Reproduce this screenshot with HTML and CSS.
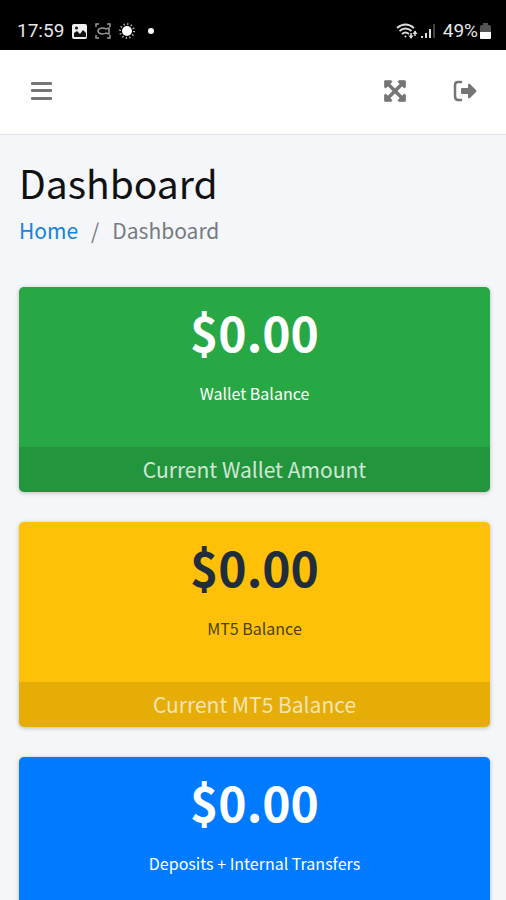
FILE: index.html
```html
<!DOCTYPE html>
<html lang="en">
<head>
<meta charset="utf-8">
<meta name="viewport" content="width=device-width, initial-scale=1">
<title>Dashboard</title>
<link rel="stylesheet" href="styles.css">
</head>
<body>
<div class="status">
  <div class="status-group">
    <span class="clock">17:59</span>
    <svg width="17" height="17" viewBox="0 0 17 17"><rect x="1" y="1" width="15" height="15" rx="2" fill="#eee"/><path d="M3 10l3-2 3 3 3-4 3 3v4H3z" fill="#111"/><circle cx="5.500" cy="5" r="1.500" fill="#111"/></svg>
    <svg width="18" height="18" viewBox="0 0 18 18" fill="none" stroke="#999" stroke-width="1.500"><path d="M2 5V2h3M13 2h3v3M16 13v3h-3M5 16H2v-3"/><path d="M5 7q4-2 7 0l3-1v6l-3-1q-3 2-7 0-2-2 0-4z"/></svg>
    <svg class="sun" width="18" height="18" viewBox="0 0 18 18"><circle cx="9" cy="9" r="5" fill="#fff"/><circle cx="9" cy="9" r="7" fill="none" stroke="#bbb" stroke-width="2" stroke-dasharray="1.200 2.465"/></svg>
    <svg width="8" height="8" viewBox="0 0 8 8"><circle cx="4" cy="4" r="3" fill="#fff"/></svg>
  </div>
  <div class="status-group status-right">
    <svg width="22" height="18" viewBox="0 0 22 18" fill="none" stroke="#ddd" stroke-width="1.800"><path d="M1 6q8.500-7 17 0M3.500 9q6-5 12 0M6 12q3.500-3 7 0"/><circle cx="9.500" cy="14.500" r="1" fill="#ddd" stroke="none"/><path d="M15 16v-5M19 9v5" stroke-width="1.500"/><path d="M12.500 13.500L15 17l2.500-3.500zM16.500 12L19 8.500l2.500 3.500z" fill="#ddd" stroke="none"/></svg>
    <svg width="15" height="16" viewBox="0 0 15 16" fill="#ddd"><path d="M0 13h2v2H0zM4 10h2v5H4zM8 6h2v9H8z"/><path d="M12 1h2v14h-2z" fill="#444"/></svg>
    <span class="battery">49%<svg width="11" height="17" viewBox="0 0 11 17"><path d="M3 0h5v2h1q2 0 2 2v5H0V4q0-2 2-2h1z" fill="#555"/><path d="M0 9h11v6q0 1-1 1H1q-1 0-1-1z" fill="#fff"/></svg></span>
  </div>
</div>
<nav class="navbar">
  <button class="icon-button" type="button" aria-label="Toggle menu">
    <svg width="22" height="22" viewBox="0 0 22 22" fill="#757575"><rect y="2" width="21" height="3" rx="1"/><rect y="9" width="21" height="3" rx="1"/><rect y="17" width="21" height="3" rx="1"/></svg>
  </button>
  <div class="nav-actions">
    <button class="icon-button" type="button" aria-label="Fullscreen">
      <svg width="22" height="22" viewBox="0 0 448 448" fill="#757575" stroke="#757575" stroke-width="14"><path d="M440 312v104q0 24-24 24H312c-21 0-32-26-17-41l30-30-101-101-101 101 30 30c15 15 4 41-17 41H32q-24 0-24-24V312c0-21 26-32 41-17l30 30 101-101L79 123l-30 30c-15 15-41 4-41-17V32Q8 8 32 8h104c21 0 32 26 17 41l-30 30 101 101L325 79l-30-30c-15-15-4-41 17-41h104q24 0 24 24v104c0 21-26 32-41 17l-30-30-101 101 101 101 30-30c15-15 41-4 41 17z"/></svg>
    </button>
    <a class="icon-button" href="#" aria-label="Log out">
      <svg width="24" height="24" viewBox="0 0 24 24"><path d="M8 3H5Q2 3 2 6v11q0 4 3 4h3" fill="none" stroke="#757575" stroke-width="2.500" stroke-linecap="round"/><path d="M8 10q0-1 1-1h6V6q0-2 2-1l6 6q1 1 0 2l-6 6q-2 1-2-1v-3H9q-1 0-1-1z" fill="#757575"/></svg>
    </a>
  </div>
</nav>
<main class="content">
  <h1 class="title">Dashboard</h1>
  <ol class="breadcrumb">
    <li><a href="#">Home</a></li>
    <li>Dashboard</li>
  </ol>
  <div class="cards">
    <section class="card card-green">
      <div class="card-body"><h2 class="amount">$0.00</h2><p class="label">Wallet Balance</p></div>
      <a class="card-footer" href="#">Current Wallet Amount</a>
    </section>
    <section class="card card-yellow">
      <div class="card-body"><h2 class="amount">$0.00</h2><p class="label">MT5 Balance</p></div>
      <a class="card-footer" href="#">Current MT5 Balance</a>
    </section>
    <section class="card card-blue">
      <div class="card-body"><h2 class="amount">$0.00</h2><p class="label">Deposits + Internal Transfers</p></div>
    </section>
  </div>
</main>
</body>
</html>
```
FILE: styles.css
```css
* { box-sizing: border-box; }
body {
  margin: 0;
  background: #f4f6f9;
  color: #111;
  font-family: "Noto Sans CJK SC", "Noto Sans", sans-serif;
  font-size: 21px;
  line-height: 32px;
}
a { color: #1583dd; text-decoration: none; }
svg { display: block; flex: none; }
.status {
  display: flex;
  justify-content: space-between;
  align-items: center;
  height: 50px;
  padding: 12px 15px 0 17px;
  background: #000;
  color: #e6e6e6;
  font-family: Roboto, sans-serif;
  font-size: 19px;
}
.status-group { display: flex; align-items: center; gap: 6px; }
.status-right { gap: 3px; }
.clock { margin-right: 1px; }
.sun { margin-right: 5px; }
.battery { display: flex; align-items: center; gap: 2px; margin-left: 4px; }
.navbar {
  display: flex;
  justify-content: space-between;
  align-items: center;
  height: 85px;
  padding: 0 19px 2px 20px;
  background: #fff;
  border-bottom: 1px solid #dee2e6;
}
.nav-actions { display: flex; gap: 26px; }
.icon-button {
  display: flex;
  align-items: center;
  justify-content: center;
  width: 44px;
  height: 44px;
  padding: 0;
  border: 0;
  background: none;
}
.content { padding: 23px 16px 30px 19px; }
.title { margin: 0; font-size: 39px; font-weight: 400; line-height: 48px; }
.breadcrumb {
  display: flex;
  margin: 8px 0 0;
  padding: 0;
  list-style: none;
  color: #757b81;
}
.breadcrumb li + li::before { content: "/"; padding: 0 13px; }
.cards { display: grid; gap: 30px; margin-top: 41px; }
.card {
  overflow: hidden;
  border-radius: 5px;
  box-shadow: 0 1px 4px rgba(0, 0, 0, 0.25);
  color: #fff;
  text-align: center;
}
.card-green { background: #28a745; }
.card-yellow { background: #ffc107; }
.card-blue { background: #007bff; }
.card-body { min-height: 160px; padding: 14px 16px; }
.amount { margin: 0; font-size: 48px; font-weight: 700; line-height: 60px; }
.label { margin: 20px 0 0; font-size: 16px; line-height: 24px; }
.card-yellow .amount { color: #1f2d3d; }
.card-yellow .label { color: #4b421f; }
.card-footer {
  display: block;
  padding: 6px 16px 7px;
  background: rgba(0, 0, 0, 0.1);
  color: rgba(255, 255, 255, 0.8);
}
.card-yellow .card-footer { color: rgba(255, 255, 255, 0.7); }
```
